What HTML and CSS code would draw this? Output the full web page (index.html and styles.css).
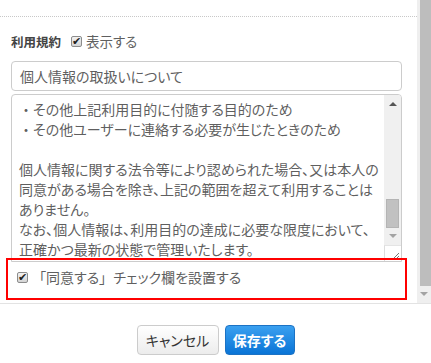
FILE: index.html
```html
<!DOCTYPE html>
<html lang="ja">
<head>
<meta charset="utf-8">
<link rel="stylesheet" href="styles.css">
</head>
<body>
<div class="modal">
  <div class="modal-body">
    <div class="content">
      <div class="divider"></div>
      <div class="field-row">
        <span class="label">利用規約</span>
        <span class="check small"><span class="box">✔</span>表示する</span>
      </div>
      <div class="input">個人情報の取扱いについて</div>
      <div class="textarea">
        <div class="ta-text">
          <p><span class="dot">・</span>その他上記利用目的に付随する目的のため</p>
          <p><span class="dot">・</span>その他ユーザーに連絡する必要が生じたときのため</p>
          <p>&nbsp;</p>
          <p>個人情報に関する法令等により認められた場合、又は本人の</p>
          <p>同意がある場合を除き、上記の範囲を超えて利用することは</p>
          <p>ありません。</p>
          <p>なお、個人情報は、利用目的の達成に必要な限度において、</p>
          <p>正確かつ最新の状態で管理いたします。</p>
        </div>
        <div class="ta-scroll">
          <div class="ta-track">
            <span class="arrow up"></span>
            <span class="ta-thumb"></span>
            <span class="arrow down"></span>
          </div>
          <div class="ta-corner">
            <svg width="8" height="8" viewBox="0 0 8 8"><path d="M1 7 L7 1 M4 7 L7 4" stroke="#777" stroke-width="1" fill="none"/></svg>
          </div>
        </div>
      </div>
      <div class="agree-row">
        <span class="check"><span class="box">✔</span><span class="agree-text"><span class="br open">「</span>同意する<span class="br close">」</span>チェック欄を設置する</span></span>
      </div>
      <div class="highlight"></div>
    </div>
    <div class="page-scroll">
      <div class="ps-thumb"></div>
      <div class="ps-bottom"><span class="arrow down"></span></div>
    </div>
  </div>
  <div class="modal-footer">
    <button class="btn btn-cancel">キャンセル</button>
    <button class="btn btn-save">保存する</button>
  </div>
</div>
</body>
</html>
```
FILE: styles.css
```css
* { box-sizing: border-box; }
html, body { margin: 0; padding: 0; background: #fff; }
body {
  font-family: "Noto Sans CJK JP", "Noto Sans", sans-serif;
  font-size: 14px;
  color: #5f5f5f;
  width: 431px;
  height: 363px;
  overflow: hidden;
}
.modal { display: flex; flex-direction: column; height: 363px; }
.modal-body {
  height: 304px;
  display: flex;
  border-bottom: 1px solid #e3e3e3;
  overflow: hidden;
}
.content {
  position: relative;
  width: 417px;
  padding: 16px 15px 0 11px;
}
.divider {
  margin-left: -11px;
  margin-right: -15px;
  border-top: 1px dotted #c8c8c8;
}
.field-row {
  display: flex;
  align-items: center;
  height: 20px;
  margin-top: 14px;
}
.label { font-weight: bold; color: #444; margin-right: 10px; font-size: 12.5px; }
.check { display: inline-flex; align-items: center; color: #5f5f5f; font-feature-settings: "palt"; }
.check.small { font-size: 13.5px; }
.box {
  width: 11px; height: 11px;
  border: 1px solid #8c8c8c;
  border-radius: 2px;
  background: linear-gradient(#f2f2f2, #d4d4d4);
  font-size: 11px;
  line-height: 9px;
  color: #1e1e1e;
  text-align: center;
  margin-right: 4px;
  font-family: "DejaVu Sans", sans-serif;
  flex: none;
  overflow: hidden;
}
.agree-text .br { display: inline-block; width: 14px; }
.agree-text .open { text-align: right; }
.agree-text .close { text-align: left; }
.input {
  margin-top: 10px;
  height: 30px;
  border: 1px solid #ccc;
  border-radius: 4px;
  padding: 0 8px;
  line-height: 28px;
  font-feature-settings: "palt";
}
.textarea {
  margin-top: 3px;
  height: 168px;
  border: 1px solid #ccc;
  border-radius: 4px 4px 0 0;
  display: flex;
  overflow: hidden;
}
.ta-text {
  flex: 1;
  padding: 4px 0 0 7px;
  line-height: 20px;
  font-feature-settings: "palt";
  white-space: nowrap;
  overflow: hidden;
}
.ta-text p { margin: 0; }
.dot { display: inline-block; width: 14px; text-align: center; }
.ta-scroll {
  width: 17px;
  display: flex;
  flex-direction: column;
}
.ta-track {
  flex: 1;
  background: #f0f0f0;
  display: flex;
  flex-direction: column;
  align-items: center;
  padding-top: 7px;
}
.ta-thumb {
  width: 13px;
  height: 29px;
  background: #c1c1c1;
  border: 1px solid #b4b4b4;
  margin-top: 93px;
}
.arrow { width: 0; height: 0; border-left: 4px solid transparent; border-right: 4px solid transparent; }
.arrow.up { border-bottom: 4px solid #555; }
.arrow.down { border-top: 4px solid #a3a3a3; margin-top: 6px; }
.ta-corner {
  height: 16px;
  background: #fff;
  border-left: 1px solid #ddd;
  border-top: 1px solid #e4e4e4;
  display: flex;
  align-items: flex-end;
  justify-content: flex-end;
  padding: 0 1px 1px 0;
}
.agree-row {
  padding-left: 6px;
  margin-top: 5px;
  height: 20px;
  display: flex;
  align-items: center;
}
.highlight {
  position: absolute;
  left: 6px;
  top: 258px;
  width: 401px;
  height: 42px;
  border: 2px solid #f00;
  pointer-events: none;
}
.page-scroll {
  width: 14px;
  display: flex;
  flex-direction: column;
  background: #efefef;
  padding-left: 3px;
}
.ps-thumb { flex: 1; background: #bdbdbd; }
.ps-bottom {
  height: 17px;
  margin-left: -3px;
  display: flex;
  justify-content: center;
  align-items: flex-start;
  background: #efefef;
}
.ps-bottom .arrow.down { margin-top: 6px; }
.modal-footer {
  flex: 1;
  display: flex;
  justify-content: center;
  align-items: flex-start;
  gap: 6px;
  padding-top: 21px;
}
.btn {
  height: 30px;
  border-radius: 4px;
  font-family: "Noto Sans CJK JP", sans-serif;
  font-size: 14px;
  padding: 0;
  white-space: nowrap;
  font-feature-settings: "palt";
}
.btn-cancel {
  width: 82px;
  border: 1px solid #ccc;
  background: linear-gradient(#ffffff, #ececec);
  color: #333;
}
.btn-save {
  width: 70px;
  border: 1px solid #1c72c4;
  background: linear-gradient(#3aa0f0, #0a74d6);
  color: #fff;
  font-weight: bold;
}
```
